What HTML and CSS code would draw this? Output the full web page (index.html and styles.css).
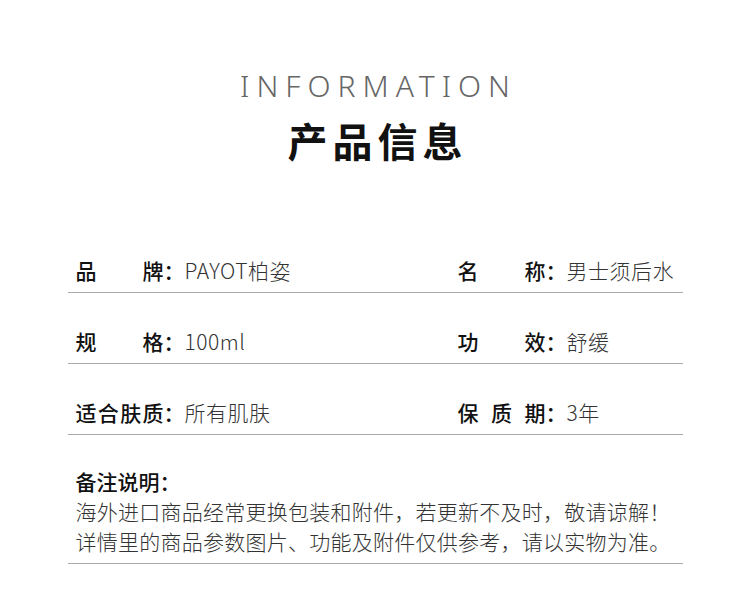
FILE: index.html
```html
<!DOCTYPE html>
<html lang="zh-CN">
<head>
    <meta charset="UTF-8">
    <meta name="viewport" content="width=device-width, initial-scale=1.0">
    <title>产品信息</title>
    <link rel="stylesheet" href="styles.css">
</head>
<body>
    <div class="page">
        <header class="heading">
            <div class="heading-en">INFORMATION</div>
            <h1 class="heading-cn">产品信息</h1>
        </header>

        <div class="info-table">
            <div class="info-row">
                <div class="info-cell"><span class="label">品牌</span><span class="colon">：</span><span class="value">PAYOT柏姿</span></div>
                <div class="info-cell"><span class="label">名称</span><span class="colon">：</span><span class="value">男士须后水</span></div>
            </div>
            <div class="info-row">
                <div class="info-cell"><span class="label">规格</span><span class="colon">：</span><span class="value">100ml</span></div>
                <div class="info-cell"><span class="label">功效</span><span class="colon">：</span><span class="value">舒缓</span></div>
            </div>
            <div class="info-row">
                <div class="info-cell"><span class="label">适合肤质</span><span class="colon">：</span><span class="value">所有肌肤</span></div>
                <div class="info-cell"><span class="label">保质期</span><span class="colon">：</span><span class="value">3年</span></div>
            </div>
        </div>

        <div class="note">
            <div class="note-title">备注说明：</div>
            <p class="note-text">海外进口商品经常更换包装和附件，若更新不及时，敬请谅解！<br>详情里的商品参数图片、功能及附件仅供参考，请以实物为准。</p>
        </div>
    </div>
</body>
</html>
```

FILE: styles.css
```css
body {
    margin: 0;
    background: #fff;
    font-family: "Noto Sans CJK SC", "Noto Sans", sans-serif;
    color: #222;
    text-spacing-trim: space-all;
}

.page {
    width: 615px;
    margin: 0 auto;
    padding-top: 64px;
}

.heading {
    text-align: center;
}

.heading-en {
    font-family: "Noto Sans", "Noto Sans CJK SC", sans-serif;
    font-weight: 300;
    font-size: 30px;
    line-height: 44px;
    letter-spacing: 7px;
    margin-right: -7px;
    color: #666;
}

.heading-cn {
    margin: 6px 0 0;
    font-size: 40px;
    line-height: 52px;
    font-weight: 700;
    letter-spacing: 5px;
    margin-right: -5px;
    color: #111;
}

.info-table {
    margin-top: 65px;
}

.info-row {
    display: grid;
    grid-template-columns: 382px 1fr;
    height: 71px;
    align-items: end;
    border-bottom: 1px solid #aaa;
    box-sizing: border-box;
}

.info-row:first-child {
    height: 62px;
}

.info-cell {
    display: flex;
    align-items: center;
    padding-left: 8px;
    height: 44px;
    font-size: 21px;
    line-height: 44px;
}

.label {
    width: 88px;
    font-weight: 500;
    color: #111;
    text-align: justify;
    text-align-last: justify;
}

.colon {
    font-weight: 500;
    color: #111;
}

.value {
    font-weight: 300;
    color: #333;
    letter-spacing: 0.5px;
}

.note {
    padding: 31px 0 7px 8px;
    border-bottom: 1px solid #aaa;
}

.note-title {
    font-size: 21px;
    line-height: 30px;
    font-weight: 500;
    color: #111;
}

.note-text {
    margin: 0;
    font-size: 21px;
    line-height: 30px;
    font-weight: 300;
    letter-spacing: 0.25px;
    color: #333;
}
```
